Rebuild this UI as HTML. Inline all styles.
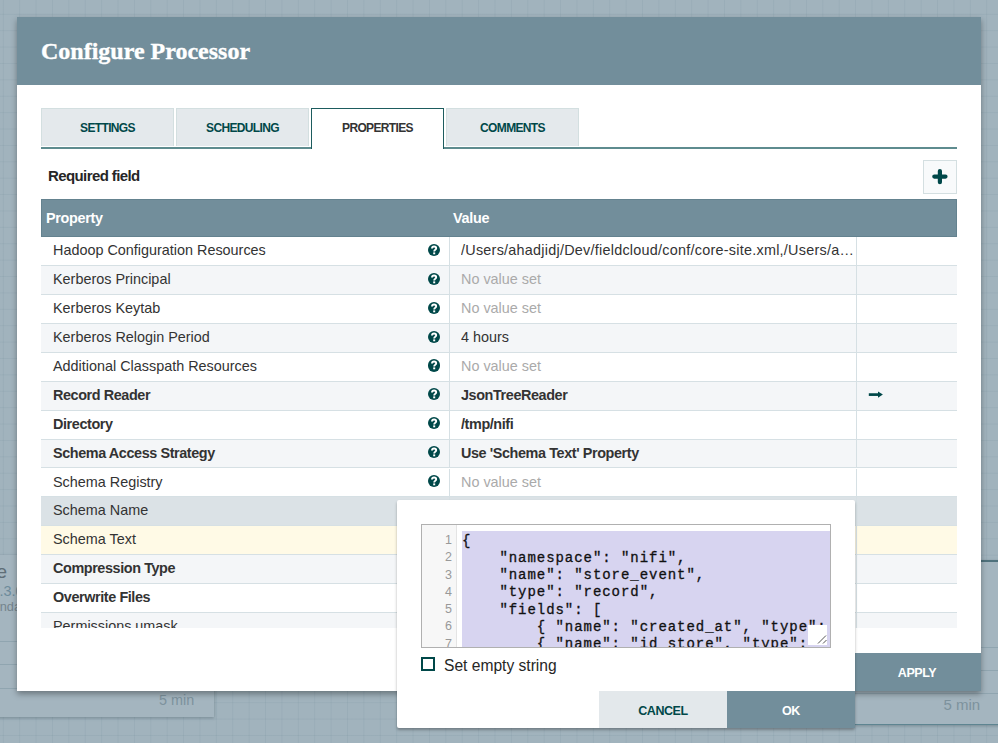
<!DOCTYPE html>
<html><head><meta charset="utf-8">
<style>
*{box-sizing:border-box;margin:0;padding:0}
html,body{width:998px;height:743px;overflow:hidden}
body{position:relative;font-family:"Liberation Sans",sans-serif;background:#a1b3bd;
background-image:linear-gradient(to right,rgba(120,145,160,.18) 1px,transparent 1px),linear-gradient(to bottom,rgba(120,145,160,.18) 1px,transparent 1px);
background-size:16.4px 16.4px;background-position:2.8px 13.8px}
.abs{position:absolute}
.proc{position:absolute;background:#a4b5bf;box-shadow:0 1px 3px rgba(40,60,70,.35)}
#dlg{position:absolute;left:17px;top:17px;width:964px;height:674px;background:#fff;box-shadow:0 3px 6px rgba(0,0,0,.35)}
#hdr{position:absolute;left:0;top:0;width:964px;height:68px;background:#728e9b}
#title{position:absolute;left:24px;top:20px;font-family:"Liberation Serif",serif;font-weight:bold;font-size:24px;line-height:28px;color:#fff;white-space:nowrap;-webkit-text-stroke:0.35px #fff}
.tab{position:absolute;top:91px;height:38px;width:133px;background:#e4e9ec;border:1px solid #d3dfe0;border-bottom:none;color:#004849;font-weight:bold;font-size:12px;letter-spacing:-0.65px;text-align:center;line-height:39px}
.tab.sel{background:#fff;border:1px solid #1d5c5e;border-bottom:none;color:#333;height:41px;z-index:2}
#tabline{position:absolute;left:24px;top:130px;width:916px;height:1.8px;background:#5e8c8f}
#req{position:absolute;left:31px;top:150px;font-weight:bold;font-size:15px;line-height:18px;color:#262626;letter-spacing:-0.6px}
#plus{position:absolute;left:906px;top:143px;width:34px;height:34px;background:#f8fafb;border:1px solid #d4dfe1}
#grid{position:absolute;left:24px;top:182px;width:916px;height:429px;overflow:hidden}
#ghdr{position:absolute;left:0;top:0;width:916px;height:38px;background:#728e9b;box-shadow:inset 0 0 0 1px #64828f;color:#fff;font-weight:bold;font-size:14.4px;letter-spacing:-0.3px}
#ghdr span{position:absolute;top:0;line-height:38px}
.row{position:absolute;left:0;width:916px;height:28.9px;border-bottom:1px solid #d6e0e4;background:#fff;font-size:14.4px;color:#333}
.row.odd{background:#f4f6f8}
.row.selrow{background:#dbe2e6}
.row.yel{background:#fffae6}
.row .c1{position:absolute;left:12px;top:-1px;line-height:28px;white-space:nowrap;letter-spacing:0px}
.row .c2{position:absolute;left:420px;top:-1px;line-height:28px;white-space:nowrap;width:392px;overflow:hidden;text-overflow:ellipsis;letter-spacing:0px}
.row.b .c1,.row.b .c2{font-weight:bold;letter-spacing:-0.4px}
.row .nv{color:#aaaaaa}
.row .d1{position:absolute;left:408px;top:0;width:1px;height:28px;background:#d6e0e4}
.row .d2{position:absolute;left:815px;top:0;width:1px;height:28px;background:#d6e0e4}
.q{position:absolute;left:387px;top:6.5px;width:12.2px;height:12.2px;border-radius:50%;background:#004849}
.q svg{position:absolute;left:0;top:0}
#pop{position:absolute;left:397px;top:500px;width:458px;height:228px;background:#fff;border-radius:2px;box-shadow:0 2px 3px rgba(0,0,0,.3)}
#ed{position:absolute;left:24px;top:24px;width:410px;height:124px;border:1px solid #b0b0b0;background:#fff;overflow:hidden}
#gut{position:absolute;left:0;top:0;width:35px;height:122px;background:#f7f7f7;border-right:1px solid #e4e4e4}
#code{position:absolute;left:40px;top:6px;width:368px;height:130px;background:#d7d4f0}
.ln{position:absolute;left:0;width:30px;text-align:right;font-family:"Liberation Sans",sans-serif;font-size:12.5px;color:#999;line-height:17.28px}
.cl{position:absolute;left:40px;font-family:"Liberation Mono",monospace;font-size:14px;letter-spacing:0.95px;color:#111;line-height:17.28px;white-space:pre;-webkit-text-stroke:0.3px #111}
#rsz{position:absolute;left:386px;top:100px;width:19px;height:20px;background:#fff}
#chk{position:absolute;left:24px;top:157px;width:14px;height:14px;border:2px solid #004849}
#chkl{position:absolute;left:47px;top:155.8px;font-size:15.6px;color:#262626;line-height:20px}
.btn{position:absolute;width:128px;height:37px;font-weight:bold;font-size:12.5px;letter-spacing:-0.45px;text-align:center;line-height:40.5px}
</style></head><body>

<!-- background processors -->
<div class="proc" style="left:-20px;top:555px;width:234px;height:162px">
  <div class="abs" style="left:20px;top:86px;width:234px;height:1px;background:rgba(110,135,148,.35)"></div>
  <div class="abs" style="left:20px;top:109px;width:234px;height:1px;background:rgba(110,135,148,.35)"></div>
  <div class="abs" style="left:20px;top:133px;width:234px;height:1px;background:rgba(110,135,148,.35)"></div>
  <div class="abs" style="left:-180px;top:5px;width:207px;text-align:right;font-size:19px;line-height:24px;color:#5f6e77;white-space:nowrap">PutParquete</div>
  <div class="abs" style="left:11.5px;top:27px;font-size:14.4px;line-height:18px;color:#6d8b9b;white-space:nowrap">1.3.0</div>
  <div class="abs" style="left:-18px;top:44px;font-size:12.8px;line-height:16px;color:#74848d;white-space:nowrap">nifi-standard-nar</div>
  <div class="abs" style="left:179px;top:136px;font-size:14.4px;line-height:18px;color:#7d929d;white-space:nowrap">5 min</div>
</div>
<div class="proc" style="left:855px;top:560px;width:160px;height:164.8px;border-top:2px solid #4f717c;border-bottom:1.5px solid #5e8591">
  <div class="abs" style="left:0;top:85px;width:160px;height:1px;background:rgba(110,135,148,.35)"></div>
  <div class="abs" style="left:0;top:108px;width:160px;height:1px;background:rgba(110,135,148,.35)"></div>
  <div class="abs" style="left:0;top:131px;width:160px;height:1px;background:rgba(110,135,148,.35)"></div>
  <div class="abs" style="left:88.5px;top:133.5px;font-size:15px;line-height:18px;color:#7d929d;white-space:nowrap">5 min</div>
</div>

<div id="dlg">
  <div id="hdr"><div id="title">Configure Processor</div></div>
  <div class="tab" style="left:24px">SETTINGS</div>
  <div class="tab" style="left:159px">SCHEDULING</div>
  <div class="tab sel" style="left:294px">PROPERTIES</div>
  <div class="tab" style="left:429px">COMMENTS</div>
  <div id="tabline"></div>
  <div id="req">Required field</div>
  <div id="plus"><svg class="abs" style="left:0;top:0" width="32" height="32" viewBox="0 0 32 32"><path d="M10.3 15.6 H21.5 M15.9 10 V21.2" stroke="#004849" stroke-width="4.2" stroke-linecap="round"/></svg></div>
  <div id="grid">
    <div id="ghdr"><span style="left:5px">Property</span><span style="left:412px">Value</span></div>
    <div class="row" style="top:38.30px"><div class="c1">Hadoop Configuration Resources</div><div class="q"><svg width="12.2" height="12.2" viewBox="0 0 12.2 12.2"><path d="M4 4.6 C4 3.3 4.9 2.5 6.1 2.5 C7.3 2.5 8.2 3.2 8.2 4.3 C8.2 5.2 7.5 5.6 7 6 C6.5 6.3 6.2 6.6 6.2 7.4" fill="none" stroke="#fff" stroke-width="1.9"/><rect x="5.2" y="8.4" width="2" height="1.9" fill="#fff"/></svg></div><div class="d1"></div><div class="d2"></div><div class="c2" style="letter-spacing:0.25px;width:400px;text-overflow:clip">/Users/ahadjidj/Dev/fieldcloud/conf/core-site.xml,/Users/a&#8230;</div></div>
    <div class="row odd" style="top:67.20px"><div class="c1">Kerberos Principal</div><div class="q"><svg width="12.2" height="12.2" viewBox="0 0 12.2 12.2"><path d="M4 4.6 C4 3.3 4.9 2.5 6.1 2.5 C7.3 2.5 8.2 3.2 8.2 4.3 C8.2 5.2 7.5 5.6 7 6 C6.5 6.3 6.2 6.6 6.2 7.4" fill="none" stroke="#fff" stroke-width="1.9"/><rect x="5.2" y="8.4" width="2" height="1.9" fill="#fff"/></svg></div><div class="d1"></div><div class="d2"></div><div class="c2 nv">No value set</div></div>
    <div class="row" style="top:96.10px"><div class="c1">Kerberos Keytab</div><div class="q"><svg width="12.2" height="12.2" viewBox="0 0 12.2 12.2"><path d="M4 4.6 C4 3.3 4.9 2.5 6.1 2.5 C7.3 2.5 8.2 3.2 8.2 4.3 C8.2 5.2 7.5 5.6 7 6 C6.5 6.3 6.2 6.6 6.2 7.4" fill="none" stroke="#fff" stroke-width="1.9"/><rect x="5.2" y="8.4" width="2" height="1.9" fill="#fff"/></svg></div><div class="d1"></div><div class="d2"></div><div class="c2 nv">No value set</div></div>
    <div class="row odd" style="top:125.00px"><div class="c1">Kerberos Relogin Period</div><div class="q"><svg width="12.2" height="12.2" viewBox="0 0 12.2 12.2"><path d="M4 4.6 C4 3.3 4.9 2.5 6.1 2.5 C7.3 2.5 8.2 3.2 8.2 4.3 C8.2 5.2 7.5 5.6 7 6 C6.5 6.3 6.2 6.6 6.2 7.4" fill="none" stroke="#fff" stroke-width="1.9"/><rect x="5.2" y="8.4" width="2" height="1.9" fill="#fff"/></svg></div><div class="d1"></div><div class="d2"></div><div class="c2">4 hours</div></div>
    <div class="row" style="top:153.90px"><div class="c1">Additional Classpath Resources</div><div class="q"><svg width="12.2" height="12.2" viewBox="0 0 12.2 12.2"><path d="M4 4.6 C4 3.3 4.9 2.5 6.1 2.5 C7.3 2.5 8.2 3.2 8.2 4.3 C8.2 5.2 7.5 5.6 7 6 C6.5 6.3 6.2 6.6 6.2 7.4" fill="none" stroke="#fff" stroke-width="1.9"/><rect x="5.2" y="8.4" width="2" height="1.9" fill="#fff"/></svg></div><div class="d1"></div><div class="d2"></div><div class="c2 nv">No value set</div></div>
    <div class="row odd b" style="top:182.80px"><div class="c1">Record Reader</div><div class="q"><svg width="12.2" height="12.2" viewBox="0 0 12.2 12.2"><path d="M4 4.6 C4 3.3 4.9 2.5 6.1 2.5 C7.3 2.5 8.2 3.2 8.2 4.3 C8.2 5.2 7.5 5.6 7 6 C6.5 6.3 6.2 6.6 6.2 7.4" fill="none" stroke="#fff" stroke-width="1.9"/><rect x="5.2" y="8.4" width="2" height="1.9" fill="#fff"/></svg></div><div class="d1"></div><div class="d2"></div><div class="c2">JsonTreeReader</div><svg class="abs" style="left:826px;top:8px" width="17" height="10" viewBox="0 0 17 10"><path d="M1.8 4.6 H12.5" stroke="#004849" stroke-width="2.7"/><path d="M11 1.4 L15.9 4.6 L11 7.8 Z" fill="#004849"/></svg></div>
    <div class="row b" style="top:211.70px"><div class="c1">Directory</div><div class="q"><svg width="12.2" height="12.2" viewBox="0 0 12.2 12.2"><path d="M4 4.6 C4 3.3 4.9 2.5 6.1 2.5 C7.3 2.5 8.2 3.2 8.2 4.3 C8.2 5.2 7.5 5.6 7 6 C6.5 6.3 6.2 6.6 6.2 7.4" fill="none" stroke="#fff" stroke-width="1.9"/><rect x="5.2" y="8.4" width="2" height="1.9" fill="#fff"/></svg></div><div class="d1"></div><div class="d2"></div><div class="c2">/tmp/nifi</div></div>
    <div class="row odd b" style="top:240.60px"><div class="c1">Schema Access Strategy</div><div class="q"><svg width="12.2" height="12.2" viewBox="0 0 12.2 12.2"><path d="M4 4.6 C4 3.3 4.9 2.5 6.1 2.5 C7.3 2.5 8.2 3.2 8.2 4.3 C8.2 5.2 7.5 5.6 7 6 C6.5 6.3 6.2 6.6 6.2 7.4" fill="none" stroke="#fff" stroke-width="1.9"/><rect x="5.2" y="8.4" width="2" height="1.9" fill="#fff"/></svg></div><div class="d1"></div><div class="d2"></div><div class="c2">Use &#39;Schema Text&#39; Property</div></div>
    <div class="row" style="top:269.50px"><div class="c1">Schema Registry</div><div class="q"><svg width="12.2" height="12.2" viewBox="0 0 12.2 12.2"><path d="M4 4.6 C4 3.3 4.9 2.5 6.1 2.5 C7.3 2.5 8.2 3.2 8.2 4.3 C8.2 5.2 7.5 5.6 7 6 C6.5 6.3 6.2 6.6 6.2 7.4" fill="none" stroke="#fff" stroke-width="1.9"/><rect x="5.2" y="8.4" width="2" height="1.9" fill="#fff"/></svg></div><div class="d1"></div><div class="d2"></div><div class="c2 nv">No value set</div></div>
    <div class="row selrow" style="top:298.40px"><div class="c1">Schema Name</div><div class="d1"></div><div class="d2"></div></div>
    <div class="row yel" style="top:327.30px"><div class="c1">Schema Text</div><div class="d1"></div><div class="d2"></div></div>
    <div class="row odd b" style="top:356.20px"><div class="c1">Compression Type</div><div class="d1"></div><div class="d2"></div></div>
    <div class="row b" style="top:385.10px"><div class="c1">Overwrite Files</div><div class="d1"></div><div class="d2"></div></div>
    <div class="row odd" style="top:414.00px"><div class="c1">Permissions umask</div><div class="d1"></div><div class="d2"></div></div>
  </div>
  <div class="btn" style="left:836px;top:635.5px;height:38.5px;line-height:40px;background:#728e9b;color:#fff">APPLY</div>
</div>

<div id="pop">
  <div id="ed">
    <div id="gut"></div>
    <div id="code"></div>
    <div class="ln" style="top:7.00px">1</div><div class="cl" style="top:7.50px">{</div>
    <div class="ln" style="top:24.28px">2</div><div class="cl" style="top:24.78px">    "namespace": "nifi",</div>
    <div class="ln" style="top:41.56px">3</div><div class="cl" style="top:42.06px">    "name": "store_event",</div>
    <div class="ln" style="top:58.84px">4</div><div class="cl" style="top:59.34px">    "type": "record",</div>
    <div class="ln" style="top:76.12px">5</div><div class="cl" style="top:76.62px">    "fields": [</div>
    <div class="ln" style="top:93.40px">6</div><div class="cl" style="top:93.90px">        { "name": "created_at", "type":</div>
    <div class="ln" style="top:110.68px">7</div><div class="cl" style="top:111.18px">        { "name": "id_store", "type": "</div>
    <div id="rsz"><svg class="abs" style="left:0;top:0" width="19" height="20" viewBox="0 0 19 20"><path d="M10 18.5 L18 10.5 M15 18.5 L18.5 15" stroke="#555" stroke-width="1"/></svg></div>
  </div>
  <div id="chk"></div>
  <div id="chkl">Set empty string</div>
  <div class="btn" style="left:202px;top:191px;background:#e3e8eb;color:#004849">CANCEL</div>
  <div class="btn" style="left:330px;top:191px;background:#728e9b;color:#fff">OK</div>
</div>
</body></html>
